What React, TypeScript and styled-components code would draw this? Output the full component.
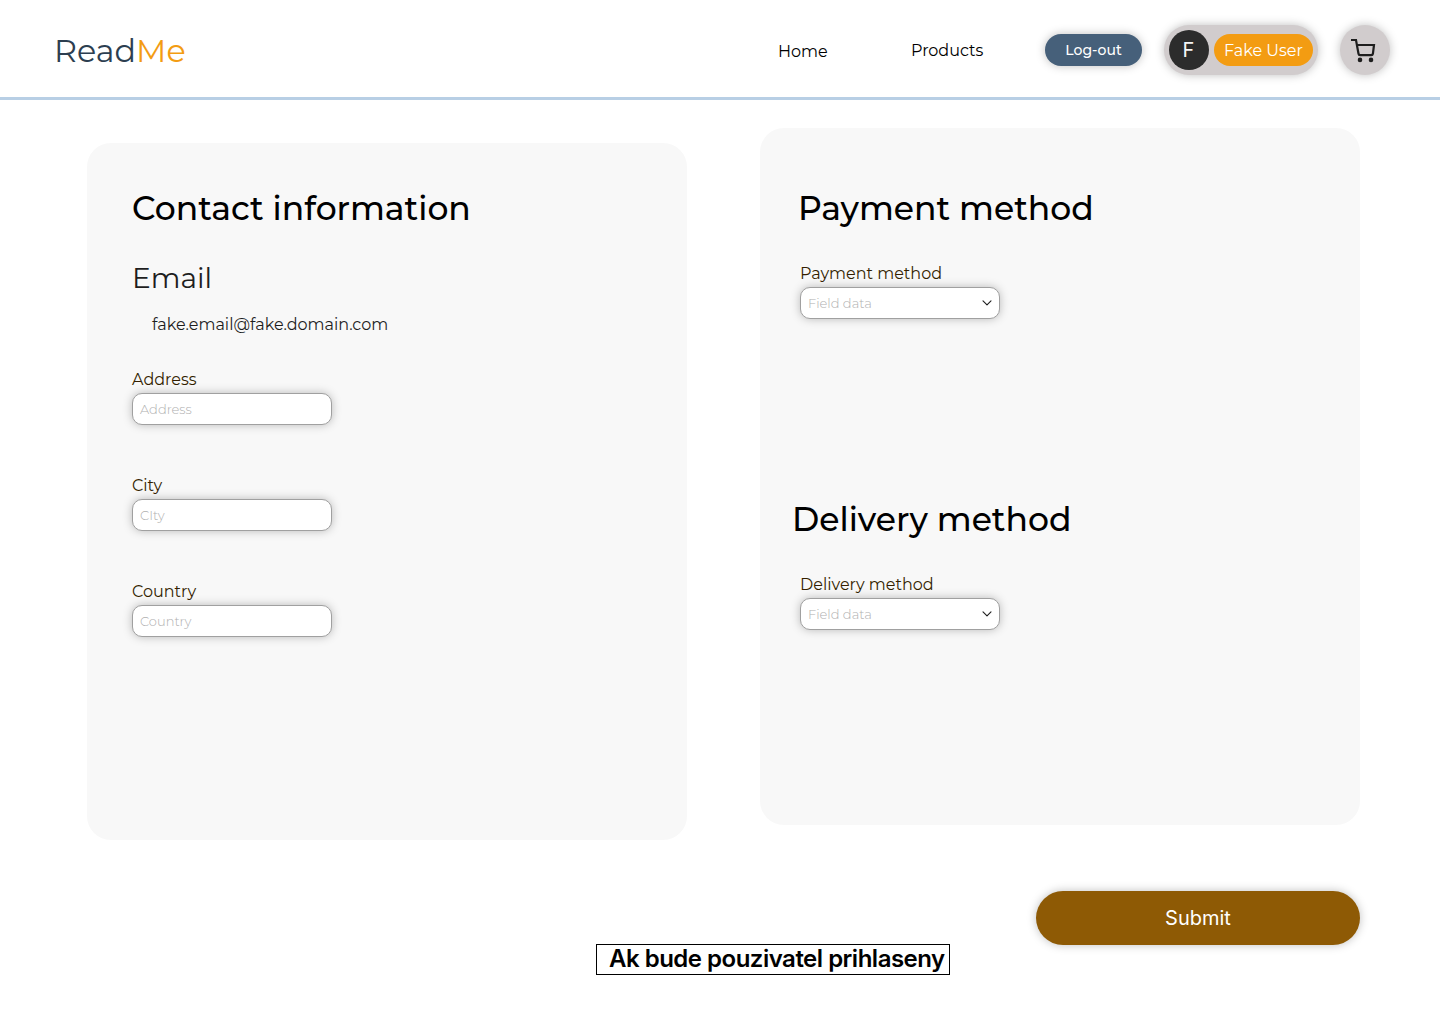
import React from 'react';
import styled, { createGlobalStyle } from 'styled-components';

const GlobalStyle = createGlobalStyle`
  *, *::before, *::after { box-sizing: border-box; }
  body { margin: 0; background: #fff; font-family: Montserrat, Inter, sans-serif; color: #000; }
  button, input { font: inherit; }
`;

const Page = styled.div`
  width: 1440px;
  height: 1024px;
  overflow: hidden;
`;

const Header = styled.header`
  display: flex;
  align-items: flex-start;
  height: 100px;
  padding: 25px 50px 0 54px;
  border-bottom: 3px solid #b8cfe5;
`;

const Logo = styled.div`
  flex: 1;
  font-size: 31.8px;
  line-height: 52px;
  color: #2c3e50;
`;

const LogoAccent = styled.span`
  color: #f39c12;
`;

const NavLink = styled.a<{ $width: number; $line: number }>`
  width: ${(p) => p.$width}px;
  font-size: 16px;
  line-height: ${(p) => p.$line}px;
  white-space: nowrap;
`;

const LogoutButton = styled.button`
  width: 97px;
  height: 32px;
  margin: 9px 22px 0 0;
  padding: 1px 0 0;
  border: 0;
  border-radius: 16px;
  background: #46607a;
  color: #fff;
  font-size: 14px;
  font-weight: 500;
  line-height: 31px;
  box-shadow: 0 0 10px rgba(0, 0, 0, 0.25);
`;

const UserChip = styled.div`
  display: flex;
  align-items: center;
  gap: 5px;
  width: 154px;
  height: 50px;
  padding: 0 5px;
  margin-right: 22px;
  border-radius: 25px;
  background: #d1cccd;
  box-shadow: 0 0 10px rgba(0, 0, 0, 0.25);
`;

const Avatar = styled.span`
  width: 40px;
  height: 40px;
  padding-right: 1px;
  border-radius: 50%;
  background: #2c2c2c;
  color: #f5f5f5;
  font: 400 20px/40px Inter, sans-serif;
  text-align: center;
`;

const UserName = styled.span`
  width: 99px;
  height: 32px;
  padding-top: 1px;
  border-radius: 16px;
  background: #f39c12;
  color: #fff;
  font-size: 16px;
  line-height: 31px;
  text-align: center;
`;

const CartButton = styled.button`
  display: grid;
  place-items: center;
  width: 50px;
  height: 50px;
  padding: 0;
  border: 0;
  border-radius: 50%;
  background: #d1cccd;
  box-shadow: 0 0 10px rgba(0, 0, 0, 0.25);
`;

const Columns = styled.main`
  display: flex;
  align-items: flex-start;
  justify-content: space-between;
  height: 791px;
  padding: 28px 80px 0 87px;
`;

const Card = styled.section<{ $top: number; $left: number; $head: number }>`
  display: flex;
  flex-direction: column;
  width: 600px;
  height: 697px;
  margin-top: ${(p) => p.$top}px;
  padding: ${(p) => p.$head}px 0 0 ${(p) => p.$left}px;
  border-radius: 24px;
  background: #f8f8f8;
`;

const Title = styled.h1<{ $shift?: number; $after: number }>`
  margin: 0 0 ${(p) => p.$after}px ${(p) => p.$shift ?? 0}px;
  font-size: 33px;
  font-weight: 500;
  line-height: 42px;
`;

const Subtitle = styled.h2`
  margin: 0;
  font-size: 28px;
  font-weight: 400;
  line-height: 42px;
  color: #1e1e1e;
`;

const EmailValue = styled.p`
  margin: 16px 0 35px 20px;
  font-size: 16px;
  line-height: 20px;
  color: #1e1e1e;
`;

const Field = styled.label<{ $gap: number }>`
  display: flex;
  flex-direction: column;
  width: 200px;
  margin-bottom: ${(p) => p.$gap}px;
`;

const FieldLabel = styled.span`
  font-size: 16px;
  line-height: 19px;
  margin-bottom: 4px;
  white-space: nowrap;
  color: #341f00;
`;

const Control = styled.span`
  display: flex;
  align-items: center;
  justify-content: space-between;
  height: 32px;
  padding: 0 6px 0 7px;
  border: 1px solid #a0a0a0;
  border-radius: 10px;
  background: #fff;
  color: #b0b0b0;
  font-size: 13px;
  font-weight: 300;
  line-height: 16px;
  box-shadow: 0 0 10px rgba(0, 0, 0, 0.25);
`;

const SubmitRow = styled.div`
  display: flex;
  justify-content: flex-end;
  padding-right: 80px;
`;

const SubmitButton = styled.button`
  width: 324px;
  height: 54px;
  padding: 0;
  border: 0;
  border-radius: 27px;
  background: #8e5a05;
  color: #fff;
  font: 400 20px/54px Inter, sans-serif;
  box-shadow: 0 0 10px rgba(0, 0, 0, 0.25);
`;

const Note = styled.div`
  width: 354px;
  height: 31px;
  margin: -1px 0 0 596px;
  padding-left: 12px;
  border: 1px solid #000;
  font: 600 24px/28px Inter, sans-serif;
  letter-spacing: -0.5px;
  white-space: nowrap;
`;

const Chevron = () => (
  <svg width="12" height="8" viewBox="0 0 12 8" fill="none" stroke="#1e1e1e" strokeWidth="1.1" strokeLinecap="round" strokeLinejoin="round">
    <path d="M2 1.9 6 5.9 10 1.9" />
  </svg>
);

const CartIcon = () => (
  <svg width="50" height="50" viewBox="0 0 50 50" fill="none" stroke="#1e1e1e" strokeWidth="2.2">
    <path d="M11 15h5l2.5 13.8a1.6 1.6 0 0 0 1.6 1.3h11.2a1.6 1.6 0 0 0 1.6-1.3L34 20H17" />
    <circle cx="20" cy="34.9" r="2.3" fill="#1e1e1e" stroke="none" />
    <circle cx="31" cy="34.9" r="2.3" fill="#1e1e1e" stroke="none" />
  </svg>
);

type FieldProps = { label: string; hint: string; gap?: number; select?: boolean };

const FormField = ({ label, hint, gap = 51, select }: FieldProps) => (
  <Field $gap={gap}>
    <FieldLabel>{label}</FieldLabel>
    <Control>
      {hint}
      {select && <Chevron />}
    </Control>
  </Field>
);

export default function App() {
  return (
    <Page>
      <GlobalStyle />
      <Header>
        <Logo>Read<LogoAccent>Me</LogoAccent></Logo>
        <NavLink $width={133} $line={53}>Home</NavLink>
        <NavLink $width={134} $line={51}>Products</NavLink>
        <LogoutButton>Log-out</LogoutButton>
        <UserChip>
          <Avatar>F</Avatar>
          <UserName>Fake User</UserName>
        </UserChip>
        <CartButton aria-label="Cart"><CartIcon /></CartButton>
      </Header>
      <Columns>
        <Card $top={15} $left={45} $head={44}>
          <Title $after={28}>Contact information</Title>
          <Subtitle>Email</Subtitle>
          <EmailValue>fake.email@fake.domain.com</EmailValue>
          <FormField label="Address" hint="Address" />
          <FormField label="City" hint="CIty" />
          <FormField label="Country" hint="Country" />
        </Card>
        <Card $top={0} $left={40} $head={59}>
          <Title $after={35} $shift={-2}>Payment method</Title>
          <FormField label="Payment method" hint="Field data" gap={179} select />
          <Title $after={35} $shift={-8}>Delivery method</Title>
          <FormField label="Delivery method" hint="Field data" select />
        </Card>
      </Columns>
      <SubmitRow>
        <SubmitButton>Submit</SubmitButton>
      </SubmitRow>
      <Note>Ak bude pouzivatel prihlaseny</Note>
    </Page>
  );
}
